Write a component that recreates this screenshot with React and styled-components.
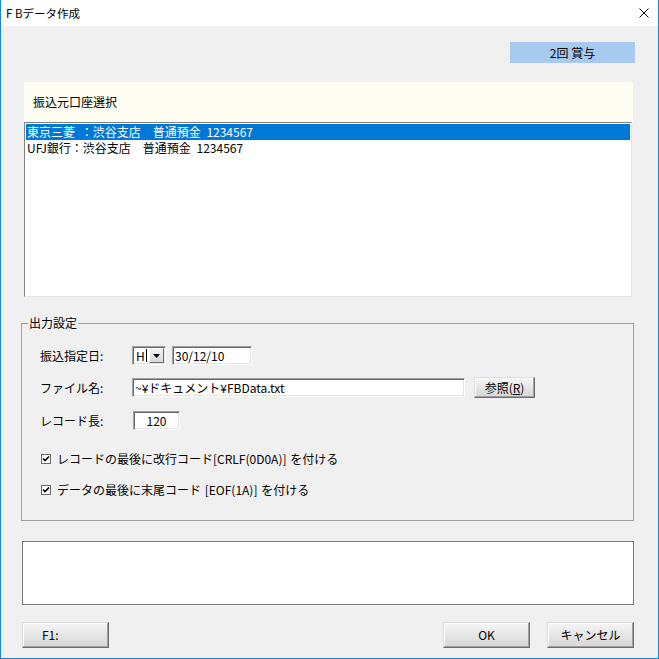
import React from 'react';
import styled, { createGlobalStyle } from 'styled-components';

const Global = createGlobalStyle`
  html, body { margin: 0; padding: 0; background: #f0f0f0; }
  body {
    font-family: "Noto Sans CJK JP", "Liberation Sans", sans-serif;
    font-size: 12px;
    line-height: 16px;
    color: #000;
  }
  * { box-sizing: border-box; }
`;

const Window = styled.div`
  width: 659px;
  height: 659px;
  border: 1px solid #1883d7;
  border-top: none;
  background: #f0f0f0;
  display: flex;
  flex-direction: column;
`;

const TitleBar = styled.div`
  height: 26px;
  flex: none;
  background: #fff;
  display: flex;
  align-items: center;
  justify-content: space-between;
  padding: 0 9px 0 5px;
`;

const TitleText = styled.span`
  font-size: 11.5px;
`;

const Body = styled.div`
  flex: 1;
  display: flex;
  flex-direction: column;
  padding: 0 24px 0 21px;
`;

const Badge = styled.div`
  align-self: flex-end;
  margin: 16px -1px 0 0;
  width: 125px;
  height: 21px;
  background: #a8caf0;
  display: flex;
  align-items: center;
  justify-content: center;
`;

const SourcePanel = styled.section`
  margin: 19px 1px 0 2px;
  display: flex;
  flex-direction: column;
`;

const PanelHeader = styled.div`
  height: 40px;
  background: #fffdf2;
  display: flex;
  align-items: center;
  padding-left: 9px;
`;

const ListBox = styled.ul`
  margin: 0 1px 0 0;
  padding: 1px;
  list-style: none;
  height: 175px;
  background: #fff;
  border: 1px solid;
  border-color: #828282 #e3e3e3 #e3e3e3 #828282;
`;

const ListItem = styled.li`
  height: 16px;
  line-height: 16px;
  padding-left: 1px;
  white-space: pre;
  word-spacing: 3px;
  background: ${p => (p.$selected ? '#0078d7' : 'transparent')};
  color: ${p => (p.$selected ? '#fff' : '#000')};
`;

const Group = styled.fieldset`
  margin: 18px 0 0 -1px;
  padding: 0;
  border: 1px solid #a0a0a0;
  min-inline-size: 0;
`;

const Legend = styled.legend`
  margin-left: 6px;
  padding: 0 1px;
  line-height: 16px;
`;

const GroupInner = styled.div`
  padding: 15px 0 22px 18px;
  display: flex;
  flex-direction: column;
`;

const FieldRow = styled.div`
  display: flex;
  align-items: center;
  height: ${p => p.$h || 19}px;
  margin-top: ${p => p.$gap || 0}px;
`;

const FieldLabel = styled.span`
  width: 92px;
  flex: none;
`;

const TextBox = styled.div`
  width: ${p => p.$w}px;
  height: 19px;
  flex: none;
  margin-left: ${p => p.$ml || 0}px;
  background: #fff;
  border: 1px solid;
  border-color: #a0a0a0 #fff #fff #a0a0a0;
  box-shadow: inset 1px 1px 0 #696969, inset -1px -1px 0 #e3e3e3;
  display: flex;
  align-items: center;
  justify-content: ${p => (p.$center ? 'center' : 'flex-start')};
  padding: 0 2px;
  white-space: pre;
`;

const Combo = styled.div`
  width: 34px;
  height: 19px;
  flex: none;
  background: #fff;
  border: 1px solid;
  border-color: #a0a0a0 #fff #fff #a0a0a0;
  box-shadow: inset 1px 1px 0 #696969, inset -1px -1px 0 #e3e3e3;
  display: flex;
  align-items: center;
  padding: 1px;
`;

const ComboValue = styled.span`
  flex: 1;
  display: flex;
  align-items: center;
  padding-left: 2px;
`;

const Caret = styled.span`
  width: 1px;
  height: 13px;
  background: #000;
  margin-left: 1px;
`;

const ComboButton = styled.span`
  width: 15px;
  height: 15px;
  background: linear-gradient(#f2f2f2, #d9d9d9);
  border: 1px solid;
  border-color: #fff #6d6d6d #6d6d6d #fff;
  display: flex;
  align-items: center;
  justify-content: center;
`;

const PushButton = styled.button`
  width: ${p => p.$w || 87}px;
  height: ${p => p.$h || 26}px;
  flex: none;
  margin-left: ${p => p.$ml || '0'};
  font: inherit;
  color: #000;
  border: 1px solid;
  border-color: #dcdcdc #6d6d6d #6d6d6d #dcdcdc;
  background: linear-gradient(#f6f6f6, #d6d6d6);
  box-shadow: inset -1px -1px 0 #a0a0a0, inset 1px 1px 0 #fff;
  display: flex;
  align-items: center;
  justify-content: ${p => (p.$left ? 'flex-start' : 'center')};
  padding: 0 0 0 ${p => (p.$left ? '19px' : '0')};
`;

const CheckRow = styled.label`
  display: flex;
  align-items: center;
  height: 16px;
  margin-top: ${p => p.$gap}px;
  padding-left: 1px;
  gap: 6px;
  white-space: pre;
  word-spacing: 1px;
`;

const CheckBox = styled.span`
  width: 10px;
  height: 10px;
  flex: none;
  border: 1px solid #6b6b6b;
  background: #fff;
  display: flex;
  align-items: center;
  justify-content: center;
`;

const MessageBox = styled.div`
  margin-top: 20px;
  height: 64px;
  background: #fff;
  border: 1px solid #7a7a7a;
`;

const ButtonRow = styled.div`
  margin-top: 17px;
  display: flex;
  gap: 17px;
`;

const CloseIcon = () => (
  <svg width="10" height="10" viewBox="0 0 10 10">
    <path d="M0.5 0.5 L9.5 9.5 M9.5 0.5 L0.5 9.5" stroke="#000" strokeWidth="1" fill="none" />
  </svg>
);

const DownArrow = () => (
  <svg width="7" height="4" viewBox="0 0 7 4">
    <path d="M0 0 H7 L3.5 4 Z" fill="#000" />
  </svg>
);

const CheckMark = () => (
  <svg width="8" height="8" viewBox="0 0 8 8">
    <path d="M1 3.5 L3 5.5 L7 1.5" stroke="#000" strokeWidth="1.6" fill="none" />
  </svg>
);

export default function App() {
  return (
    <>
      <Global />
      <Window>
        <TitleBar>
          <TitleText>F Bデータ作成</TitleText>
          <CloseIcon />
        </TitleBar>
        <Body>
          <Badge>2回 賞与</Badge>
          <SourcePanel>
            <PanelHeader>振込元口座選択</PanelHeader>
            <ListBox>
              <ListItem $selected>東京三菱 ：渋谷支店　普通預金 1234567</ListItem>
              <ListItem>UFJ銀行：渋谷支店　普通預金 1234567</ListItem>
            </ListBox>
          </SourcePanel>
          <Group>
            <Legend>出力設定</Legend>
            <GroupInner>
              <FieldRow>
                <FieldLabel>振込指定日:</FieldLabel>
                <Combo>
                  <ComboValue>H<Caret /></ComboValue>
                  <ComboButton><DownArrow /></ComboButton>
                </Combo>
                <TextBox $w={80} $ml={6}>30/12/10</TextBox>
              </FieldRow>
              <FieldRow $gap={12} $h={21}>
                <FieldLabel>ファイル名:</FieldLabel>
                <TextBox $w={333}>~¥ドキュメント¥FBData.txt</TextBox>
                <PushButton $w={61} $h={21} $ml="9px">参照(<u>R</u>)</PushButton>
              </FieldRow>
              <FieldRow $gap={13}>
                <FieldLabel>レコード長:</FieldLabel>
                <TextBox $w={47} $ml={1} $center>120</TextBox>
              </FieldRow>
              <CheckRow $gap={21}>
                <CheckBox><CheckMark /></CheckBox>
                レコードの最後に改行コード[CRLF(0D0A)] を付ける
              </CheckRow>
              <CheckRow $gap={15}>
                <CheckBox><CheckMark /></CheckBox>
                データの最後に末尾コード [EOF(1A)] を付ける
              </CheckRow>
            </GroupInner>
          </Group>
          <MessageBox />
          <ButtonRow>
            <PushButton $left>F1:</PushButton>
            <PushButton $ml="auto">OK</PushButton>
            <PushButton>キャンセル</PushButton>
          </ButtonRow>
        </Body>
      </Window>
    </>
  );
}
